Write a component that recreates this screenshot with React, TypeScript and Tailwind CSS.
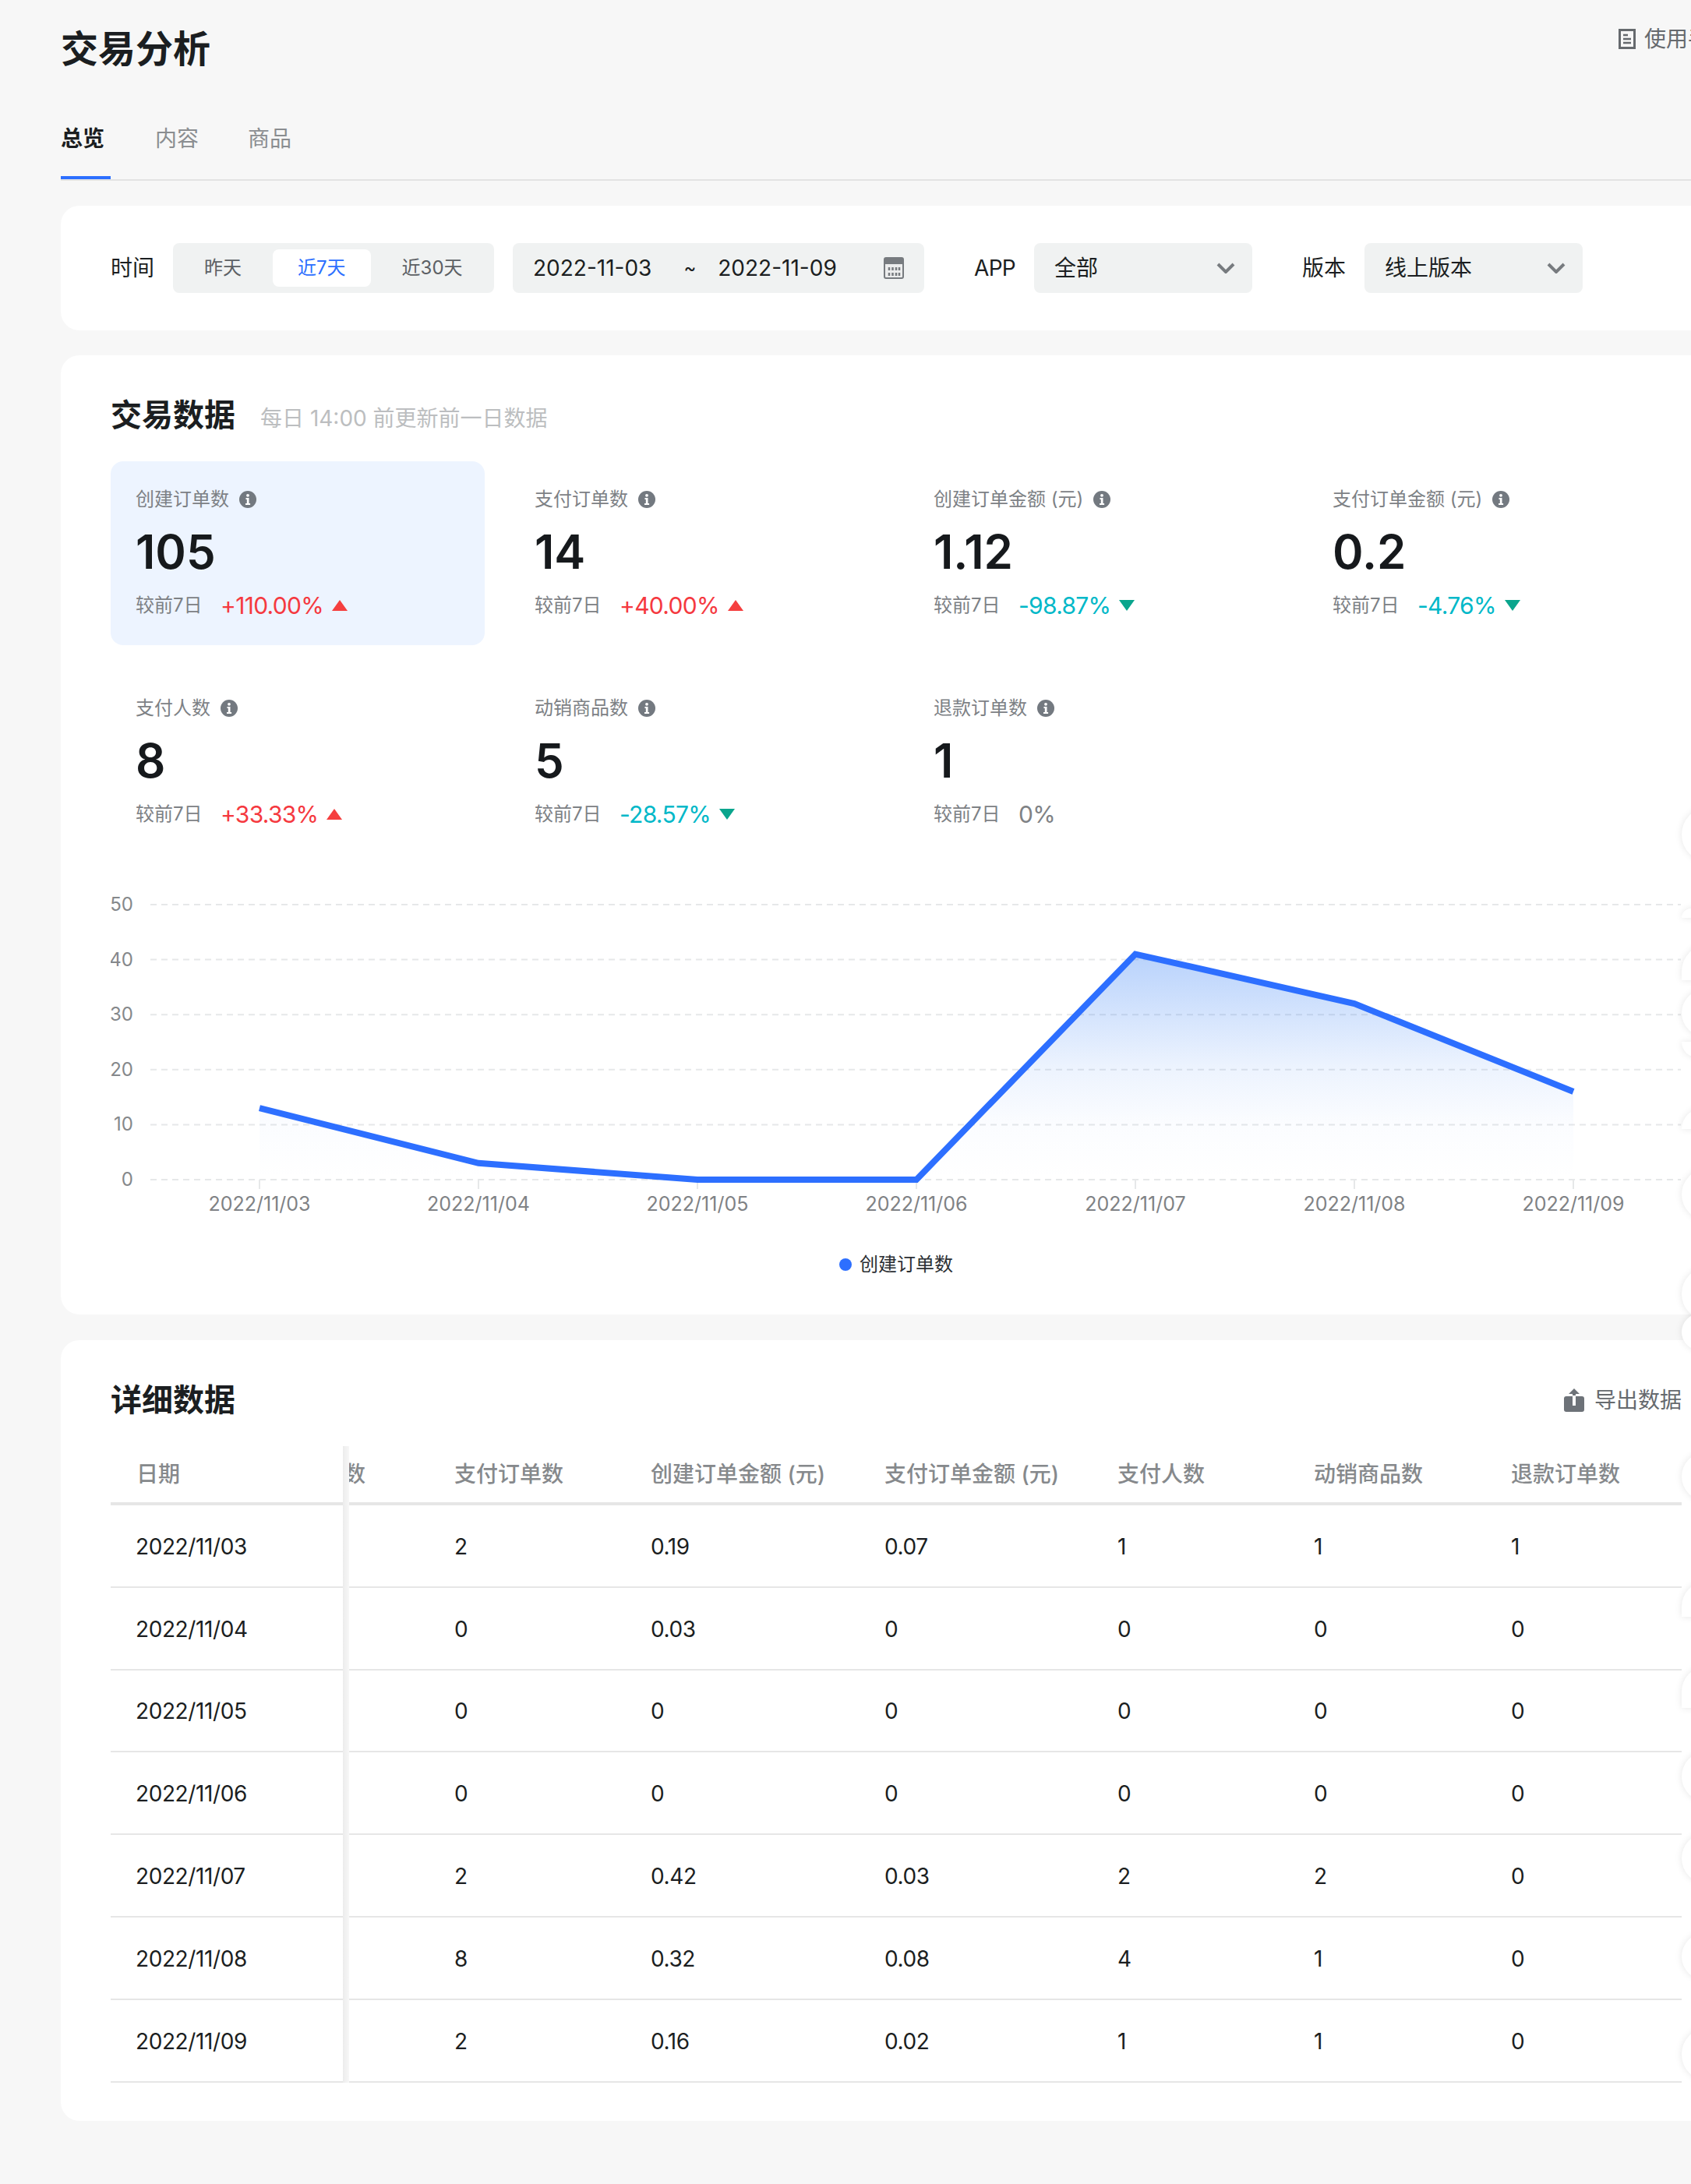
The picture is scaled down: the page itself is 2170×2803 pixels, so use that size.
import React from "react";

const rows = [
  ["2022/11/03", "2", "0.19", "0.07", "1", "1", "1"],
  ["2022/11/04", "0", "0.03", "0", "0", "0", "0"],
  ["2022/11/05", "0", "0", "0", "0", "0", "0"],
  ["2022/11/06", "0", "0", "0", "0", "0", "0"],
  ["2022/11/07", "2", "0.42", "0.03", "2", "2", "0"],
  ["2022/11/08", "8", "0.32", "0.08", "4", "1", "0"],
  ["2022/11/09", "2", "0.16", "0.02", "1", "1", "0"],
];

const stats = [
  { label: "创建订单数", value: "105", delta: "+110.00%", dir: "up", active: true },
  { label: "支付订单数", value: "14", delta: "+40.00%", dir: "up" },
  { label: "创建订单金额 (元)", value: "1.12", delta: "-98.87%", dir: "down" },
  { label: "支付订单金额 (元)", value: "0.2", delta: "-4.76%", dir: "down" },
  { label: "支付人数", value: "8", delta: "+33.33%", dir: "up" },
  { label: "动销商品数", value: "5", delta: "-28.57%", dir: "down" },
  { label: "退款订单数", value: "1", delta: "0%", dir: "flat" },
];

const dates = ["2022/11/03", "2022/11/04", "2022/11/05", "2022/11/06", "2022/11/07", "2022/11/08", "2022/11/09"];
const values = [13, 3, 0, 0, 41, 32, 16];

// the round white bits that stick in from the right edge of the page
const bubbles = [
  "top-[1036px] h-[70px] rounded-l-[35px]",
  "top-[1166px] h-[12px] rounded-tl-[35px]",
  "top-[1212px] h-[46px] rounded-tl-[35px]",
  "top-[1270px] h-[60px] rounded-l-[30px]",
  "top-[1337px] h-[20px] rounded-bl-[30px]",
  "top-[1423px] h-[26px] rounded-tl-[30px]",
  "top-[1500px] h-[66px] rounded-l-[33px]",
  "top-[1627px] h-[67px] rounded-l-[33px]",
  "top-[1686px] h-[47px] rounded-l-[24px]",
  "top-[1864px] h-[62px] rounded-l-[31px]",
  "top-[2030px] h-[45px] rounded-tl-[32px]",
  "top-[2139px] h-[53px] rounded-tl-[32px]",
  "top-[2248px] h-[64px] rounded-l-[32px]",
  "top-[2353px] h-[64px] rounded-l-[32px]",
  "top-[2481px] h-[60px] rounded-l-[30px]",
  "top-[2603px] h-[67px] rounded-l-[33px]",
];

const InfoIcon = () => (
  <svg width="22" height="22" viewBox="0 0 22 22" className="shrink-0">
    <circle cx="11" cy="11" r="11" fill="#737980" />
    <circle cx="11" cy="5.8" r="1.9" fill="#fff" />
    <path d="M8.5 9h4v7h1.6v2H8v-2h1.8v-5H8.500z" fill="#fff" />
  </svg>
);

const Chevron = () => (
  <svg width="24" height="14" viewBox="0 0 24 14">
    <path d="M2 2l10 10L22 2" fill="none" stroke="#777b7f" strokeWidth="4" />
  </svg>
);

const Delta = ({ dir }: { dir: string }) => {
  if (dir === "up") {
    return (
      <svg width="20" height="14" viewBox="0 0 20 14" className="ml-[11px]">
        <polygon points="10,0 20,14 0,14" fill="#f53f3f" />
      </svg>
    );
  }
  if (dir === "down") {
    return (
      <svg width="20" height="14" viewBox="0 0 20 14" className="ml-[11px]">
        <polygon points="0,0 20,0 10,14" fill="#0aa58d" />
      </svg>
    );
  }
  return null;
};

const Stat = ({ s }: { s: (typeof stats)[number] }) => {
  const color = s.dir === "up" ? "text-[#f5393f]" : s.dir === "down" ? "text-[#00b8c8]" : "text-[#7f8285]";
  return (
    <div className={`h-[236px] rounded-[16px] pl-[32px] pt-[37px] ${s.active ? "bg-[#edf4ff]" : ""}`}>
      <div className="flex h-[24px] items-center gap-[13px] text-[24px] leading-[24px] text-[#7d8185]">
        <span>{s.label}</span>
        <InfoIcon />
      </div>
      <div className="mt-[23px] h-[64px] text-[60px] font-semibold leading-[64px] text-[#16191c]">{s.value}</div>
      <div className="mt-[17px] flex h-[40px] items-center">
        <span className="w-[109px] text-[24px] text-[#7d8185]">较前7日</span>
        <span className={`text-[30px] tracking-[-0.7px] ${color}`}>{s.delta}</span>
        <Delta dir={s.dir} />
      </div>
    </div>
  );
};

const Chart = () => {
  const y0 = 374;
  const k = 7.06;
  const pts = values.map((v, i) => [191 + 281 * i, y0 - k * v]);
  const line = pts.map((p) => p.join(",")).join(" ");
  const area = `191,${y0} ${line} ${191 + 281 * 6},${y0}`;
  return (
    <svg width="2016" height="500" viewBox="0 0 2016 500" className="mt-[44px] block">
      <defs>
        <linearGradient id="fill" x1="0" y1="0" x2="0" y2="1">
          <stop offset="0" stopColor="#2f7bf5" stopOpacity="0.34" />
          <stop offset="0.5" stopColor="#2f7bf5" stopOpacity="0.09" />
          <stop offset="0.75" stopColor="#2f7bf5" stopOpacity="0.02" />
          <stop offset="1" stopColor="#2f7bf5" stopOpacity="0" />
        </linearGradient>
      </defs>
      {[0, 10, 20, 30, 40, 50].map((v) => (
        <g key={v}>
          <line x1="51" x2="2015" y1={y0 - k * v} y2={y0 - k * v} stroke="#e6e8e9" strokeWidth="2" strokeDasharray="8 6" />
          <text x="29" y={y0 - k * v + 8} textAnchor="end" fontSize="24" fill="#85888b">
            {v}
          </text>
        </g>
      ))}
      {dates.map((d, i) => (
        <g key={d}>
          <line x1={191 + 281 * i} x2={191 + 281 * i} y1={y0} y2={y0 + 12} stroke="#e6e8e9" strokeWidth="2" />
          <text x={191 + 281 * i} y={y0 + 40} textAnchor="middle" fontSize="25" fill="#7f8285">
            {d}
          </text>
        </g>
      ))}
      <polygon points={area} fill="url(#fill)" />
      <polyline points={line} fill="none" stroke="#2d6fff" strokeWidth="8" strokeLinejoin="miter" />
      <circle cx="943" cy="483" r="8" fill="#2d6fff" />
      <text x="961" y="491" fontSize="24" fill="#2b2f33">
        创建订单数
      </text>
    </svg>
  );
};

const gridCols = "grid grid-cols-[306px_103px_252px_300px_299px_252px_253px_251px]";

export default function App() {
  return (
    <div className="relative h-[2803px] w-[2170px] overflow-hidden bg-[#f7f7f7] pl-[78px] font-['Inter','Noto_Sans_CJK_SC',sans-serif]">
      <div className="w-[2144px]">
        {/* header */}
        <div className="flex justify-between pt-[31px]">
          <h1 className="text-[48px] font-semibold leading-[64px] text-[#1b1e21]">交易分析</h1>
          <div className="flex h-[38px] items-center gap-[11px] text-[28px] text-[#666a6e]">
            <svg width="22" height="26" viewBox="0 0 22 26">
              <rect x="1.5" y="1.500" width="19" height="23" fill="none" stroke="#666a6e" strokeWidth="3" />
              <path d="M6 8h6M6 13h10M6 18h10" stroke="#666a6e" strokeWidth="2.500" />
            </svg>
            <span>使用手册</span>
          </div>
        </div>

        {/* tabs */}
        <div className="mt-[39px] flex h-[98px] items-start border-b-2 border-[#e3e3e3]">
          <div className="mr-[57px] h-[96px] w-[64px] border-b-4 border-[#2d6fff] pt-[24px] text-[28px] font-semibold leading-[40px] text-[#1b1e21]">
            总览
          </div>
          <div className="mr-[63px] pt-[24px] text-[28px] leading-[40px] text-[#8a8d90]">内容</div>
          <div className="pt-[24px] text-[28px] leading-[40px] text-[#8a8d90]">商品</div>
        </div>

        {/* filters */}
        <div className="mt-[32px] flex h-[160px] items-center rounded-[24px] bg-white pl-[64px] text-[28px] text-[#1b1e21]">
          <span className="mr-[24px]">时间</span>
          <div className="flex h-[64px] w-[412px] items-center gap-[8px] rounded-[8px] bg-[#f0f2f2] p-[8px] text-[24px] text-[#5c6064]">
            <span className="px-[32px]">昨天</span>
            <span className="flex h-[48px] items-center rounded-[8px] bg-white px-[32px] text-[#2d6fff]">近7天</span>
            <span className="px-[32px]">近30天</span>
          </div>
          <div className="ml-[24px] flex h-[64px] w-[528px] items-center rounded-[8px] bg-[#f0f2f2] pl-[26px] pr-[26px]">
            <span>2022-11-03</span>
            <span className="ml-[41px] text-[24px]">~</span>
            <span className="ml-[28px]">2022-11-09</span>
            <svg width="26" height="28" viewBox="0 0 26 28" className="ml-auto">
              <rect x="1" y="1" width="24" height="26" rx="2" fill="#eceded" stroke="#777b7f" strokeWidth="2" />
              <path d="M1 3a2 2 0 012-2h20a2 2 0 012 2v6H1z" fill="#777b7f" />
              <path d="M7 13v4M11.500 13v4M16 13v4M20 13v4M7 20v4M11.500 20v4M16 20v4M20 20v4" stroke="#777b7f" strokeWidth="2.500" />
            </svg>
          </div>
          <span className="ml-[64px] mr-[24px] tracking-[-0.7px]">APP</span>
          <div className="flex h-[64px] w-[280px] items-center justify-between rounded-[8px] bg-[#f0f2f2] pl-[26px] pr-[22px]">
            <span>全部</span>
            <Chevron />
          </div>
          <span className="ml-[64px] mr-[24px]">版本</span>
          <div className="flex h-[64px] w-[280px] items-center justify-between rounded-[8px] bg-[#f0f2f2] pl-[26px] pr-[22px]">
            <span>线上版本</span>
            <Chevron />
          </div>
        </div>

        {/* trade data */}
        <div className="mt-[32px] h-[1231px] rounded-[24px] bg-white px-[64px] pt-[53px]">
          <div className="flex h-[48px] items-center gap-[32px]">
            <h2 className="text-[40px] font-semibold leading-[48px] text-[#1b1e21]">交易数据</h2>
            <span className="mt-[8px] text-[28px] text-[#bcbec0]">每日 14:00 前更新前一日数据</span>
          </div>
          <div className="mt-[35px] grid grid-cols-[480px_480px_480px_480px] gap-[32px]">
            {stats.map((s) => (
              <Stat key={s.label} s={s} />
            ))}
          </div>
          <Chart />
        </div>

        {/* detail table */}
        <div className="mt-[33px] h-[1002px] rounded-[24px] bg-white px-[64px] pt-[53px]">
          <div className="flex h-[48px] w-[2016px] items-center justify-between">
            <h2 className="text-[40px] font-semibold leading-[48px] text-[#1b1e21]">详细数据</h2>
            <div className="flex items-center gap-[12px] text-[28px] text-[#666a6e]">
              <svg width="28" height="30" viewBox="0 0 26 30">
                <path d="M3 10h20a3 3 0 013 3v14a3 3 0 01-3 3H3a3 3 0 01-3-3V13a3 3 0 013-3z" fill="#6d7278" />
                <path d="M13 0l7 7h-5v15h-4V7H6z" fill="#6d7278" />
                <path d="M11 9h4v13h-4z" fill="#fff" />
              </svg>
              <span>导出数据</span>
            </div>
          </div>
          <div className="relative mt-[35px] w-[2016px]">
            <div className={`${gridCols} h-[76px] items-center border-b-4 border-[#e6e6e6] text-[28px] font-medium text-[#86898c]`}>
              <span className="pl-[33px]">日期</span>
              <div className="flex justify-end overflow-hidden whitespace-nowrap pr-[82px]">创建订单数</div>
              <span className="pl-[32px]">支付订单数</span>
              <span className="pl-[32px]">创建订单金额 (元)</span>
              <span className="pl-[32px]">支付订单金额 (元)</span>
              <span className="pl-[32px]">支付人数</span>
              <span className="pl-[32px]">动销商品数</span>
              <span className="pl-[32px]">退款订单数</span>
            </div>
            {rows.map((r) => (
              <div
                key={r[0]}
                className={`${gridCols} h-[105.8px] items-center border-b-2 border-[#e6e6e6] pt-[2px] text-[28px] tracking-[-0.4px] text-[#1b1e21]`}
              >
                <span className="pl-[32px]">{r[0]}</span>
                <span />
                {r.slice(1).map((c, i) => (
                  <span key={i} className="pl-[32px]">
                    {c}
                  </span>
                ))}
              </div>
            ))}
            {/* shadow of the frozen first column */}
            <div className="absolute bottom-0 left-[298px] top-0 w-[8px] bg-gradient-to-r from-[#ececec] to-[#f7f7f7]" />
          </div>
        </div>
      </div>

      {bubbles.map((b) => (
        <div key={b} className={`absolute left-[2158px] w-[40px] bg-white shadow-[0_0_10px_rgba(0,0,0,0.1)] ${b}`} />
      ))}
    </div>
  );
}
